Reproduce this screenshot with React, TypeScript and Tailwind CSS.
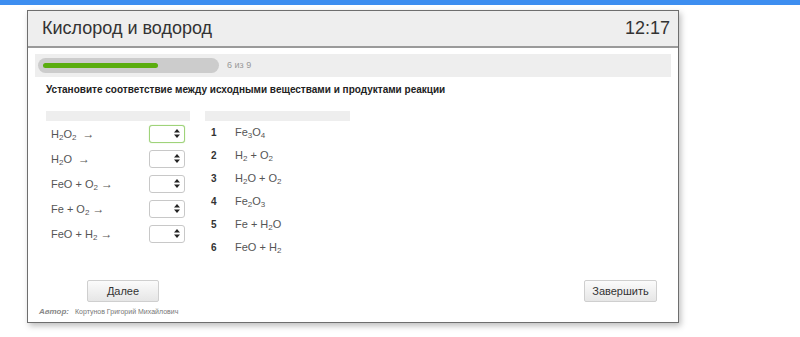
import React from "react";

const Sub = ({ children }: { children: React.ReactNode }) => (
  <span className="text-[8px] relative top-[2px] leading-none">{children}</span>
);

const Arr = () => <span className="text-[12px]">→</span>;

const Arrows = () => (
  <svg width="6" height="9" viewBox="0 0 6 9" className="block">
    <path d="M3 0 L6 3.5 L0 3.5 Z" fill="#222" />
    <path d="M3 9 L6 5.5 L0 5.5 Z" fill="#222" />
  </svg>
);

const Select = ({ focused }: { focused?: boolean }) => (
  <div
    className={
      "w-[36px] h-[18px] rounded-[3px] bg-white flex items-center justify-end pr-[4px] border " +
      (focused ? "border-[#9fd37a] shadow-[0_0_1px_#9fd37a]" : "border-[#c8c8c8]")
    }
  >
    <Arrows />
  </div>
);

const left: React.ReactNode[] = [
  <>H<Sub>2</Sub>O<Sub>2</Sub>&nbsp; <Arr /></>,
  <>H<Sub>2</Sub>O &nbsp;<Arr /></>,
  <>FeO + O<Sub>2</Sub> <Arr /></>,
  <>Fe + O<Sub>2</Sub> <Arr /></>,
  <>FeO + H<Sub>2</Sub> <Arr /></>,
];

const right: React.ReactNode[] = [
  <>Fe<Sub>3</Sub>O<Sub>4</Sub></>,
  <>H<Sub>2</Sub> + O<Sub>2</Sub></>,
  <>H<Sub>2</Sub>O + O<Sub>2</Sub></>,
  <>Fe<Sub>2</Sub>O<Sub>3</Sub></>,
  <>Fe + H<Sub>2</Sub>O</>,
  <>FeO + H<Sub>2</Sub></>,
];

const Btn = ({ children, w }: { children: React.ReactNode; w: string }) => (
  <div
    className={
      w +
      " h-[22px] flex items-center justify-center text-[11px] text-[#333] border border-[#cfcfcf] rounded-[2px] bg-gradient-to-b from-[#fbfbfb] to-[#e6e6e6]"
    }
  >
    {children}
  </div>
);

export default function App() {
  return (
    <div className="w-[800px] h-[337px] bg-white overflow-hidden" style={{ fontFamily: '"Liberation Sans", Arial, sans-serif' }}>
      <div className="h-[5px] bg-[#3d8ef0]" />
      <div className="pl-[27px] pt-[5px]">
        <div className="w-[652px] h-[313px] border border-[#6e6e6e] shadow-[2px_3px_6px_rgba(0,0,0,0.25)] bg-white flex flex-col">
          <div className="h-[37px] bg-[#eeeeee] border-b-2 border-[#9a9a9a] flex items-center justify-between pl-[14px] pr-[8px] text-[18px] text-[#333]">
            <span>Кислород и водород</span>
            <span>12:17</span>
          </div>
          <div className="px-[7px] pt-[6px] flex flex-col flex-1">
            <div className="h-[23px] bg-[#eeeeee] flex items-center pl-[3px]">
              <div className="w-[181px] h-[15px] rounded-full bg-[#cccccc] flex items-center pl-[5px]">
                <div className="w-[115px] h-[5px] rounded-full bg-[#5aad0e]" />
              </div>
              <span className="ml-[8px] text-[9px] text-[#999]">6 из 9</span>
            </div>
            <div className="mt-[6px] pl-[11px] text-[10px] font-bold text-[#222] h-[14px] leading-[14px]">
              Установите соответствие между исходными веществами и продуктами реакции
            </div>
            <div className="mt-[14px] pl-[11px] flex gap-[15px] text-[11px] text-[#555]">
              <div className="w-[144px]">
                <div className="h-[10px] bg-[#eeeeee]" />
                {left.map((l, i) => (
                  <div key={i} className="h-[25px] flex items-center justify-between pl-[5px] pr-[5px]">
                    <span>{l}</span>
                    <Select focused={i === 0} />
                  </div>
                ))}
              </div>
              <div className="w-[145px]">
                <div className="h-[10px] bg-[#eeeeee]" />
                {right.map((r, i) => (
                  <div key={i} className="h-[23px] flex items-center pl-[6px]">
                    <span className="w-[24px] font-bold text-[#333] text-[10px]">{i + 1}</span>
                    <span>{r}</span>
                  </div>
                ))}
              </div>
            </div>
            <div className="mt-auto flex justify-between pl-[52px] pr-[14px]">
              <Btn w="w-[72px]">Далее</Btn>
              <Btn w="w-[73px]">Завершить</Btn>
            </div>
            <div className="h-[20px] flex items-center pl-[4px] text-[#888]">
              <span className="text-[8px] font-bold italic">Автор:</span>
              <span className="ml-[6px] text-[7px] text-[#777]">Кортунов Григорий Михайлович</span>
            </div>
          </div>
        </div>
      </div>
    </div>
  );
}
